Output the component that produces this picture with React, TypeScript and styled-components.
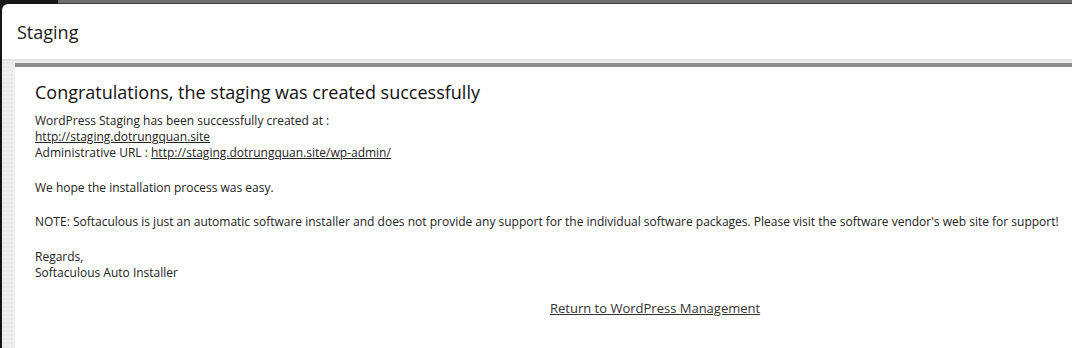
import React from 'react';
import styled, { createGlobalStyle } from 'styled-components';

const GlobalStyle = createGlobalStyle`
  html, body {
    margin: 0;
    padding: 0;
    background: #161616;
    overflow: hidden;
  }
  body {
    font-family: "Open Sans", "Noto Sans", Arial, sans-serif;
    color: #222;
  }
`;

const Page = styled.div`
  position: relative;
  height: 348px;
  padding-top: 4px;
  padding-left: 2px;
  box-sizing: border-box;
  overflow: hidden;
`;

const BackdropStrip = styled.div`
  position: absolute;
  top: 0;
  left: 58px;
  right: 0;
  height: 4px;
  background: #6e6e6e;
  border-bottom: 1px solid #3c3c3c;
  box-sizing: border-box;
`;

const Modal = styled.div`
  position: relative;
  height: 344px;
  background: #fff;
  border-top-left-radius: 6px;
  display: flex;
  flex-direction: column;
  overflow: hidden;
`;

const Header = styled.div`
  height: 55px;
  padding-left: 15px;
  display: flex;
  align-items: center;
  border-bottom: 2px solid #e2e2e2;
  font-size: 18px;
  color: #1a1a1a;
`;

const Body = styled.div`
  flex: 1;
  display: flex;
  background-color: #efefef;
  background-image: radial-gradient(#e6e6e6 1px, transparent 1px);
  background-size: 4px 4px;
  padding-left: 13px;
  padding-top: 2px;
`;

const Panel = styled.div`
  flex: 1;
  min-width: 0;
  background: #fff;
  border-top: 4px solid #8d8d8d;
  padding: 12px 0 0 20px;
  white-space: nowrap;
`;

const Title = styled.h1`
  margin: 0 0 8px;
  font-size: 18px;
  font-weight: 400;
  line-height: 26px;
  color: #111;
`;

const Text = styled.p`
  margin: 0 0 18.5px;
  font-size: 12px;
  line-height: 16px;
`;

const Anchor = styled.a`
  color: #222;
  text-decoration: underline;
`;

const Footer = styled.div`
  padding-left: 515px;
  margin-top: 16px;
  font-size: 13px;
`;

const ReturnLink = styled.a`
  color: #333;
  text-decoration: underline;
`;

export default function App() {
  return (
    <>
      <GlobalStyle />
      <Page>
        <BackdropStrip />
        <Modal>
          <Header>Staging</Header>
          <Body>
            <Panel>
              <Title>Congratulations, the staging was created successfully</Title>
              <Text>
                WordPress Staging has been successfully created at :<br />
                <Anchor href="#">http://staging.dotrungquan.site</Anchor>
                <br />
                Administrative URL : <Anchor href="#">http://staging.dotrungquan.site/wp-admin/</Anchor>
              </Text>
              <Text>We hope the installation process was easy.</Text>
              <Text>
                NOTE: Softaculous is just an automatic software installer and does not provide any support for the
                individual software packages. Please visit the software vendor's web site for support!
              </Text>
              <Text>
                Regards,
                <br />
                Softaculous Auto Installer
              </Text>
              <Footer>
                <ReturnLink href="#">Return to WordPress Management</ReturnLink>
              </Footer>
            </Panel>
          </Body>
        </Modal>
      </Page>
    </>
  );
}
